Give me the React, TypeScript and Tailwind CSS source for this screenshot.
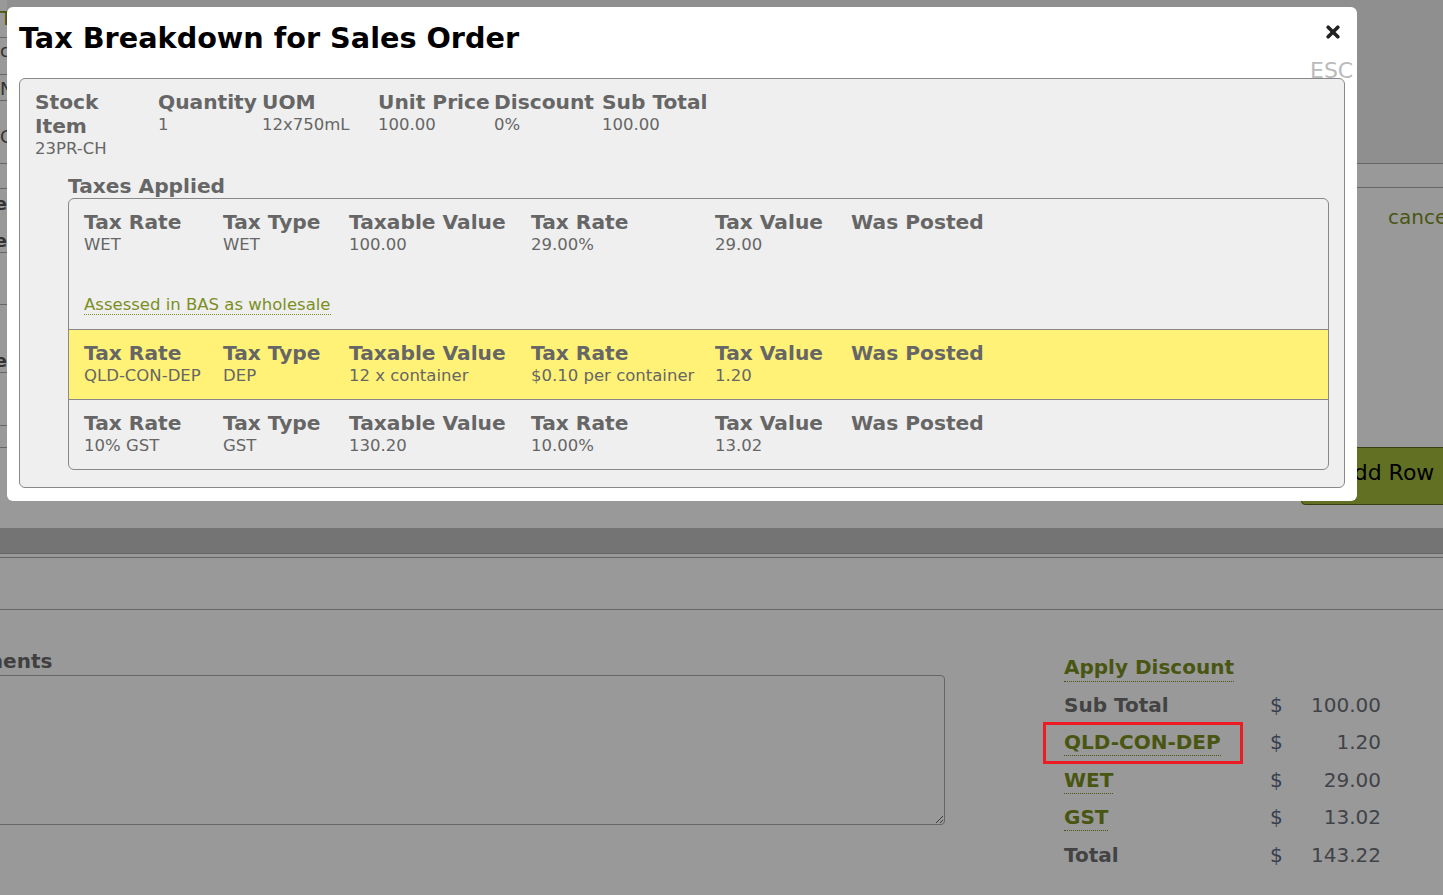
import React from "react";

const LINK = "text-[#7b8f1f]";

const itemCols = [
  { w: "w-[123px]", head: <>Stock<br />Item</>, val: "23PR-CH" },
  { w: "w-[104px]", head: "Quantity", val: "1" },
  { w: "w-[116px]", head: "UOM", val: "12x750mL" },
  { w: "w-[116px]", head: "Unit Price", val: "100.00" },
  { w: "w-[108px]", head: "Discount", val: "0%" },
  { w: "", head: "Sub Total", val: "100.00" },
];

const taxHeads = ["Tax Rate", "Tax Type", "Taxable Value", "Tax Rate", "Tax Value", "Was Posted"];
const taxWidths = ["w-[139px]", "w-[126px]", "w-[182px]", "w-[184px]", "w-[136px]", ""];

const taxes = [
  { vals: ["WET", "WET", "100.00", "29.00%", "29.00", ""], note: "Assessed in BAS as wholesale", hl: false },
  { vals: ["QLD-CON-DEP", "DEP", "12 x container", "$0.10 per container", "1.20", ""], hl: true },
  { vals: ["10% GST", "GST", "130.20", "10.00%", "13.02", ""], hl: false },
];

function TaxRow({ vals, note, hl, first }: { vals: string[]; note?: string; hl: boolean; first: boolean }) {
  return (
    <div
      className={`pl-[15px] pb-[13px] ${first ? "pt-[11px]" : "pt-[11px] border-t border-[#888]"} ${
        hl ? "bg-[#fff276]" : ""
      }`}
    >
      <div className="flex">
        {taxHeads.map((h, i) => (
          <div key={i} className={`${taxWidths[i]} shrink-0 whitespace-nowrap`}>
            <div className="text-[20.2px] font-bold leading-[24px]">{h}</div>
            <div className="text-[16.5px] leading-[21px] h-[21px]">{vals[i]}</div>
          </div>
        ))}
      </div>
      {note && (
        <div className="mt-[39px] mb-[1px] text-[16.5px] leading-[21px]">
          <span className={`${LINK} border-b border-dotted border-[#7b8f1f]`}>{note}</span>
        </div>
      )}
    </div>
  );
}

function Modal() {
  return (
    <div className="absolute left-[7px] top-[7px] w-[1350px] h-[494px] bg-white rounded-[6px] px-[12px] pt-[14px] pb-[12px]">
      <h1 className="text-[28.7px] leading-[34px] font-bold text-black">Tax Breakdown for Sales Order</h1>
      <svg className="absolute left-[1319px] top-[18px]" width="14" height="14" viewBox="0 0 14 14">
        <path d="M2.2 2.2 L11.8 11.8 M11.8 2.2 L2.2 11.8" stroke="#222" strokeWidth="3.6" strokeLinecap="round" />
      </svg>
      <span className="absolute left-[1303px] top-[53px] text-[22px] leading-[22px] text-[#bbb]">ESC</span>

      <div className="mt-[23px] border border-[#888] rounded-[6px] bg-[#efefef] pt-[11px] px-[15px] pb-[17px] text-[#666]">
        {/* stock item line */}
        <div className="flex">
          {itemCols.map((c, i) => (
            <div key={i} className={`${c.w} shrink-0 whitespace-nowrap`}>
              <div className="text-[20.2px] font-bold leading-[24px]">{c.head}</div>
              <div className="text-[16.5px] leading-[21px]">{c.val}</div>
            </div>
          ))}
        </div>

        {/* taxes */}
        <div className="ml-[33px] mt-[15px]">
          <div className="text-[20.2px] font-bold leading-[24px]">Taxes Applied</div>
          <div className="border border-[#888] rounded-[6px] overflow-hidden">
            {taxes.map((t, i) => (
              <TaxRow key={i} vals={t.vals} note={t.note} hl={t.hl} first={i === 0} />
            ))}
          </div>
        </div>
      </div>
    </div>
  );
}

function LeftStrip() {
  return (
    <div className="w-[7px] shrink-0 overflow-hidden flex flex-col text-[#555] whitespace-nowrap">
      <div className="h-[38px] border-b border-[#aaa] pt-[6px] text-[20px] leading-[24px] text-[#7b8f1f]">Tax</div>
      <div className="h-[37px] border-b border-[#aaa] pt-[1px] text-[18px] leading-[24px]">code</div>
      <div className="h-[26px] border-b border-[#aaa] pt-[2px] text-[18px] leading-[24px]">None</div>
      <div className="h-[63px] border-b border-[#aaa] pt-[24px] text-[18px] leading-[24px]">Cost</div>
      <div className="h-[25px] border-b border-[#aaa]" />
      <div className="h-[64px] border-b border-[#aaa] pt-[3px] text-[18px] font-bold leading-[24px]">
        <div className="flex justify-end">Reference</div>
        <div className="flex justify-end mt-[13px]">Date</div>
      </div>
      <div className="h-[52px] border-b border-[#aaa]" />
      <div className="h-[68px] border-b border-[#aaa] pt-[44px] text-[18px] font-bold leading-[24px]">
        <div className="flex justify-end">Type</div>
      </div>
      <div className="h-[53px] border-b border-[#aaa]" />
      <div className="h-[22px] border-b border-[#aaa]" />
    </div>
  );
}

function PageBehind() {
  const totals = [
    { label: "Sub Total", amt: "100.00", link: false },
    { label: "QLD-CON-DEP", amt: "1.20", link: true, boxed: true },
    { label: "WET", amt: "29.00", link: true },
    { label: "GST", amt: "13.02", link: true },
    { label: "Total", amt: "143.22", link: false },
  ];

  return (
    <div className="flex flex-col">
      <div className="flex h-[505px]">
        <LeftStrip />
        <div className="flex-1 flex flex-col">
          <div className="h-[164px] shrink-0 bg-[#eee] border-b border-[#aaa]" />
          <div className="h-[24px] shrink-0 border-b border-[#aaa]" />
          <div className="flex-1 flex">
            <div className="flex-1" />
            <div className="w-[142px] flex flex-col">
              <span className={`ml-[87px] mt-[17px] text-[20px] leading-[24px] whitespace-nowrap ${LINK}`}>cancel</span>
              <div className="mt-auto h-[58px] w-[160px] shrink-0 border border-[#5a6a1c] rounded-[4px] bg-[#a3bb3c] pl-[37px] pt-[12px] text-[22px] leading-[26px] text-black whitespace-nowrap">
                Add Row
              </div>
            </div>
          </div>
        </div>
      </div>

      <div className="h-[23px]" />
      <div className="h-[26px] bg-[#c1c1c1] border-b border-[#aaa]" />
      <div className="h-[4px] border-b border-[#aaa]" />
      <div className="h-[52px] border-b border-[#aaa]" />

      <div className="flex items-start pt-[39px]">
        <div className="ml-[-67px] w-[1012px] shrink-0">
          <div className="text-[20px] font-bold leading-[24px] text-[#6b6b6b]">Comments</div>
          <textarea
            readOnly
            className="block mt-[2px] w-full h-[150px] border border-[#aaa] rounded-[4px] bg-white resize"
          />
        </div>
        <div className="ml-[119px] grid grid-cols-[206px_30px_81px] auto-rows-[37.5px] text-[20px] leading-[37.5px]">
          <div className="col-span-3 font-bold">
            <span className={`${LINK} border-b border-dotted border-[#7b8f1f] pb-[2px]`}>Apply Discount</span>
          </div>
          {totals.map((t) => (
            <React.Fragment key={t.label}>
              <div className="relative font-bold whitespace-nowrap">
                {t.link ? (
                  <span className={`${LINK} border-b border-dotted border-[#7b8f1f] pb-[1px]`}>{t.label}</span>
                ) : (
                  <span className="text-[#707070]">{t.label}</span>
                )}
                {t.boxed && (
                  <div className="absolute z-10 left-[-21px] top-[-2px] w-[200px] h-[42px] border-[3px] border-[#ed1c24]" />
                )}
              </div>
              <div className="text-[#5b6a85]">$</div>
              <div className="text-right text-[#6c7178]">{t.amt}</div>
            </React.Fragment>
          ))}
        </div>
      </div>
    </div>
  );
}

export default function App() {
  return (
    <div className="relative w-[1443px] h-[895px] overflow-hidden bg-white font-['DejaVu_Sans',sans-serif]">
      <PageBehind />
      <div className="absolute inset-0 bg-black/40" />
      <Modal />
    </div>
  );
}
